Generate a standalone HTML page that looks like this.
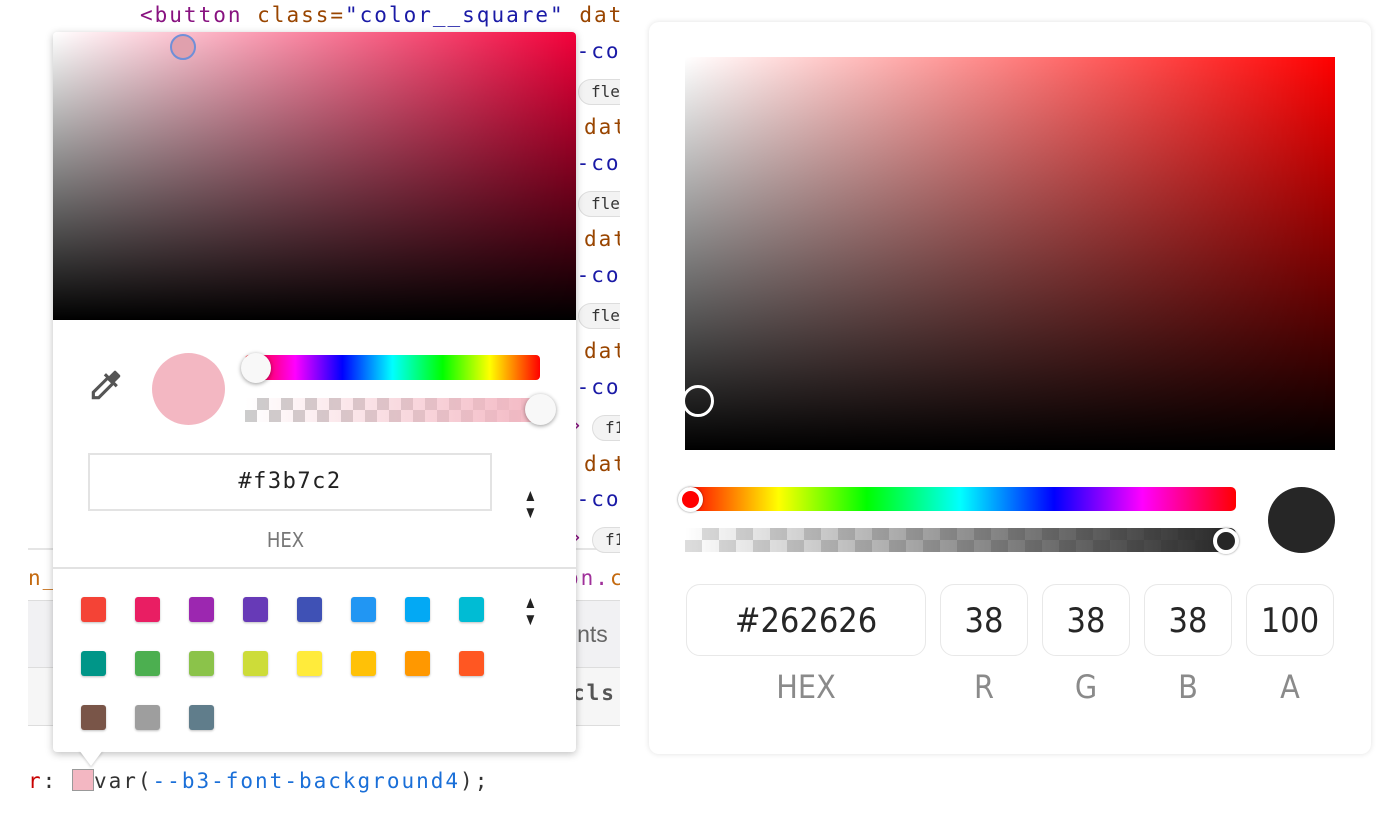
<!DOCTYPE html>
<html><head><meta charset="utf-8"><style>
*{box-sizing:border-box;margin:0;padding:0}
body{width:1390px;height:823px;background:#fff;position:relative;overflow:hidden;font-family:"Liberation Sans",sans-serif}
.a{position:absolute}
.code{font-family:"DejaVu Sans Mono","Liberation Mono",monospace;font-size:21px;letter-spacing:2px;position:absolute;white-space:nowrap}
.pill{position:absolute;height:26px;border:1px solid #ddd;border-radius:13px;background:#f3f3f3;font-family:"DejaVu Sans Mono",monospace;font-size:16px;padding:2px 0 0 12px;width:60px;color:#333}
.sw{position:absolute;width:25px;height:25px;border-radius:3px;box-shadow:0 1px 2px rgba(0,0,0,.25)}
.inp{position:absolute;top:584px;height:72px;border:1px solid #e8e8e8;border-radius:14px;background:#fff;text-align:center;line-height:72px;font-size:34px;color:#262626;font-family:"DejaVu Sans Condensed","Liberation Sans",sans-serif}
.lbl{position:absolute;top:668px;font-size:32px;color:#8a8a8a;text-align:center;font-family:"DejaVu Sans Condensed","Liberation Sans",sans-serif}
.arr{position:absolute;font-size:17px;line-height:17px;color:#222;transform:scaleX(.8)}
</style></head><body>
<div class="a" style="left:0;top:0;width:620px;height:823px;overflow:hidden">
<div class="code" style="left:140px;top:3px;color:#881280">&lt;button <span style="color:#994500">class=</span><span style="color:#1a1aa6">"color__square"</span> <span style="color:#994500">dat</span></div>
<div class="a" style="left:28px;top:548px;width:592px;height:2px;background:#e5e5e5"></div>
<div class="a" style="left:28px;top:600px;width:592px;height:68px;background:#f1f1f3;border-top:1px solid #ddd;border-bottom:1px solid #ddd"></div>
<div class="a" style="left:28px;top:668px;width:592px;height:58px;background:#f6f6f6;border-bottom:1px solid #ddd"></div>
<div class="code" style="left:28px;top:566px;color:#c46a10">n__</div>
<div class="code" style="left:566px;top:566px;color:#a0309a">on.<span style="color:#c46a10">c</span></div>
<div class="code" style="left:572px;top:621px;color:#666;font-family:'Liberation Sans';font-size:23px;letter-spacing:0">ints</div>
<div class="code" style="left:572px;top:681px;color:#555;font-weight:bold">cls</div>
<div class="code" style="left:562px;top:39px;color:#1a1aa6">d-co</div>
<div class="pill" style="left:578px;top:79px">fle</div>
<div class="code" style="left:584px;top:115px;color:#994500">dat</div>
<div class="code" style="left:562px;top:151px;color:#1a1aa6">d-co</div>
<div class="pill" style="left:578px;top:191px">fle</div>
<div class="code" style="left:584px;top:227px;color:#994500">dat</div>
<div class="code" style="left:562px;top:263px;color:#1a1aa6">d-co</div>
<div class="pill" style="left:578px;top:303px">fle</div>
<div class="code" style="left:584px;top:339px;color:#994500">dat</div>
<div class="code" style="left:562px;top:375px;color:#1a1aa6">d-co</div>
<div class="code" style="left:570px;top:413px;color:#881280">›</div><div class="pill" style="left:592px;top:415px">f1</div>
<div class="code" style="left:584px;top:452px;color:#994500">dat</div>
<div class="code" style="left:562px;top:487px;color:#1a1aa6">d-co</div>
<div class="code" style="left:570px;top:525px;color:#881280">›</div><div class="pill" style="left:592px;top:527px">f1</div>
<div class="code" style="left:28px;top:769px;color:#333"><span style="color:#c80000">r</span>: <span style="display:inline-block;width:22px;height:22px;background:#f3b7c2;border:1px solid #999;vertical-align:-3px"></span>var(<span style="color:#1a6fd8">--b3-font-background4</span>);</div>
</div>
<div class="a" style="left:53px;top:32px;width:523px;height:720px;background:#fff;border-radius:4px;box-shadow:0 2px 8px rgba(0,0,0,.25)">
<div class="a" style="left:0;top:0;width:523px;height:288px;border-radius:4px 4px 0 0;background:linear-gradient(to top,#000,rgba(0,0,0,0)),linear-gradient(to right,#fff,#f3003a)"></div>
<div class="a" style="left:117px;top:2px;width:26px;height:26px;border-radius:50%;border:2px solid #6f8fd8;background:#e0a0ad"></div>
<svg class="a" style="left:34px;top:334px" width="38" height="38" viewBox="0 0 24 24"><path fill="#555" d="M20.7 5.6l-2.3-2.3a1 1 0 0 0-1.4 0l-3.1 3.1-1.9-1.9-1.4 1.4 1.4 1.4L3 16.2V21h4.8l8.9-8.9 1.4 1.4 1.4-1.4-1.9-1.9 3.1-3.1a1 1 0 0 0 0-1.5zM7 19H5v-2l8.1-8.1 2 2z"/></svg>
<div class="a" style="left:99px;top:321px;width:73px;height:72px;border-radius:50%;background:#f3b7c2"></div>
<div class="a" style="left:192px;top:323px;width:295px;height:25px;border-radius:4px;background:linear-gradient(to right,#f00,#f0f 17%,#00f 33%,#0ff 50%,#0f0 67%,#ff0 83%,#f00)"></div>
<div class="a" style="left:188px;top:321px;width:30px;height:30px;border-radius:50%;background:#f8f8f8;box-shadow:0 1px 4px rgba(0,0,0,.4)"></div>
<div class="a" style="left:192px;top:366px;width:300px;height:24px;background:linear-gradient(to right,rgba(243,183,194,0),#f3b7c2),repeating-conic-gradient(#ccc 0 25%,#fff 0 50%) 0 0/24px 24px"></div>
<div class="a" style="left:472px;top:362px;width:31px;height:31px;border-radius:50%;background:#f8f8f8;box-shadow:0 1px 4px rgba(0,0,0,.4)"></div>
<div class="a" style="left:35px;top:421px;width:404px;height:58px;border:2px solid #e3e3e3;text-align:center;line-height:54px;font-family:'DejaVu Sans Mono',monospace;font-size:22px;letter-spacing:1.5px;color:#222">#f3b7c2</div>
<div class="arr" style="left:469px;top:455px">▲<br>▼</div>
<div class="a" style="left:0;top:496px;width:465px;text-align:center;font-size:20px;color:#777;font-family:'DejaVu Sans Condensed',sans-serif">HEX</div>
<div class="a" style="left:0;top:535px;width:523px;height:2px;background:#e2e2e2"></div>
<div class="sw" style="left:28px;top:565px;background:#f44336"></div>
<div class="sw" style="left:82px;top:565px;background:#e91e63"></div>
<div class="sw" style="left:136px;top:565px;background:#9c27b0"></div>
<div class="sw" style="left:190px;top:565px;background:#673ab7"></div>
<div class="sw" style="left:244px;top:565px;background:#3f51b5"></div>
<div class="sw" style="left:298px;top:565px;background:#2196f3"></div>
<div class="sw" style="left:352px;top:565px;background:#03a9f4"></div>
<div class="sw" style="left:406px;top:565px;background:#00bcd4"></div>
<div class="sw" style="left:28px;top:619px;background:#009688"></div>
<div class="sw" style="left:82px;top:619px;background:#4caf50"></div>
<div class="sw" style="left:136px;top:619px;background:#8bc34a"></div>
<div class="sw" style="left:190px;top:619px;background:#cddc39"></div>
<div class="sw" style="left:244px;top:619px;background:#ffeb3b"></div>
<div class="sw" style="left:298px;top:619px;background:#ffc107"></div>
<div class="sw" style="left:352px;top:619px;background:#ff9800"></div>
<div class="sw" style="left:406px;top:619px;background:#ff5722"></div>
<div class="sw" style="left:28px;top:673px;background:#795548"></div>
<div class="sw" style="left:82px;top:673px;background:#9e9e9e"></div>
<div class="sw" style="left:136px;top:673px;background:#607d8b"></div>
<div class="arr" style="left:469px;top:562px">▲<br>▼</div>
</div>
<div class="a" style="left:79px;top:750px;width:0;height:0;border-left:12px solid transparent;border-right:12px solid transparent;border-top:16px solid #fff;filter:drop-shadow(0 2px 1px rgba(0,0,0,.15))"></div>
<div class="a" style="left:649px;top:22px;width:722px;height:732px;background:#fff;border-radius:10px;box-shadow:0 0 6px rgba(0,0,0,.12)"></div>
<div class="a" style="left:685px;top:57px;width:650px;height:393px;background:linear-gradient(to top,#000,rgba(0,0,0,0)),linear-gradient(to right,#fff,#f00)"></div>
<div class="a" style="left:682px;top:385px;width:32px;height:32px;border-radius:50%;border:3px solid #fff"></div>
<div class="a" style="left:685px;top:487px;width:551px;height:24px;border-radius:5px;background:linear-gradient(to right,#f00,#ff0 17%,#0f0 33%,#0ff 50%,#00f 67%,#f0f 83%,#f00)"></div>
<div class="a" style="left:678px;top:487px;width:25px;height:25px;border-radius:50%;background:#f00;border:4px solid #fff;box-shadow:0 0 2px rgba(0,0,0,.5)"></div>
<div class="a" style="left:685px;top:528px;width:551px;height:24px;border-radius:0 6px 6px 0;background:linear-gradient(to right,rgba(38,38,38,0),#262626),repeating-conic-gradient(#ddd 0 25%,#fff 0 50%) 0 0/34px 24px"></div>
<div class="a" style="left:1213px;top:528px;width:26px;height:26px;border-radius:50%;background:#262626;border:4px solid #fff;box-shadow:0 0 2px rgba(0,0,0,.5)"></div>
<div class="a" style="left:1268px;top:487px;width:67px;height:66px;border-radius:50%;background:#262626"></div>
<div class="inp" style="left:686px;width:240px">#262626</div>
<div class="inp" style="left:940px;width:88px">38</div>
<div class="inp" style="left:1042px;width:88px">38</div>
<div class="inp" style="left:1144px;width:88px">38</div>
<div class="inp" style="left:1246px;width:88px">100</div>
<div class="lbl" style="left:686px;width:240px">HEX</div>
<div class="lbl" style="left:940px;width:88px">R</div>
<div class="lbl" style="left:1042px;width:88px">G</div>
<div class="lbl" style="left:1144px;width:88px">B</div>
<div class="lbl" style="left:1246px;width:88px">A</div>
</body></html>
